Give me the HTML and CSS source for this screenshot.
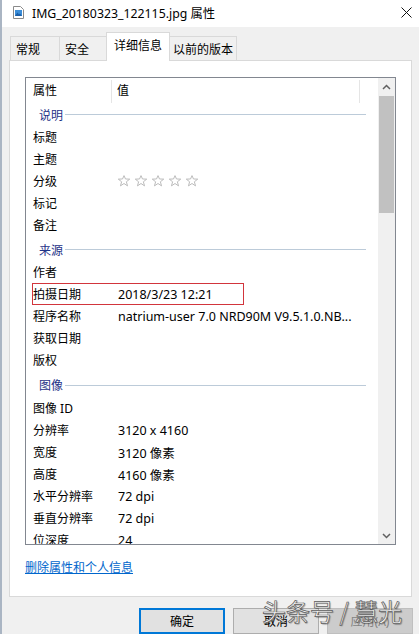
FILE: index.html
```html
<!DOCTYPE html>
<html lang="zh-CN">
<head>
<meta charset="utf-8">
<link rel="stylesheet" href="styles.css">
</head>
<body>
<div class="window">
  <div class="titlebar">
    <svg class="ficon" width="11" height="13" viewBox="0 0 11 13">
      <path d="M0.5 0.5 H7.5 L10.5 3.5 V12.5 H0.5 Z" fill="#fff" stroke="#8a8a8a"/>
      <rect x="2" y="4" width="7" height="6" fill="#3c8ed8"/>
      <path d="M2 10 L4.5 6.5 L6 8.5 L7 7.5 L9 10 Z" fill="#1b5fa8"/>
    </svg>
    <span class="title">IMG_20180323_122115.jpg 属性</span>
    <svg class="close" width="11" height="11" viewBox="0 0 11 11">
      <path d="M0.5 0.5 L10.5 10.5 M10.5 0.5 L0.5 10.5" stroke="#111" stroke-width="1"/>
    </svg>
  </div>
  <div class="tabs">
    <div class="tab">常规</div>
    <div class="tab">安全</div>
    <div class="tab active">详细信息</div>
    <div class="tab">以前的版本</div>
  </div>
  <div class="panel">
    <div class="list">
      <div class="list-body">
        <div class="header">
          <div class="hcell hname">属性</div>
          <div class="hcell hvalue">值</div>
        </div>
        <div class="group group-first"><span>说明</span><i class="gline"></i></div>
        <div class="row"><div class="cells"><span class="name">标题</span><span class="value"></span></div></div>
        <div class="row"><div class="cells"><span class="name">主题</span><span class="value"></span></div></div>
        <div class="row"><div class="cells"><span class="name">分级</span><span class="value stars">
          <svg class="star" viewBox="0 0 12 12"><polygon points="6,0.6 7.47,3.98 11.71,4.15 8.38,6.77 9.53,10.85 6,8.5 2.47,10.85 3.62,6.77 0.29,4.15 4.53,3.98"/></svg>
          <svg class="star" viewBox="0 0 12 12"><polygon points="6,0.6 7.47,3.98 11.71,4.15 8.38,6.77 9.53,10.85 6,8.5 2.47,10.85 3.62,6.77 0.29,4.15 4.53,3.98"/></svg>
          <svg class="star" viewBox="0 0 12 12"><polygon points="6,0.6 7.47,3.98 11.71,4.15 8.38,6.77 9.53,10.85 6,8.5 2.47,10.85 3.62,6.77 0.29,4.15 4.53,3.98"/></svg>
          <svg class="star" viewBox="0 0 12 12"><polygon points="6,0.6 7.47,3.98 11.71,4.15 8.38,6.77 9.53,10.85 6,8.5 2.47,10.85 3.62,6.77 0.29,4.15 4.53,3.98"/></svg>
          <svg class="star" viewBox="0 0 12 12"><polygon points="6,0.6 7.47,3.98 11.71,4.15 8.38,6.77 9.53,10.85 6,8.5 2.47,10.85 3.62,6.77 0.29,4.15 4.53,3.98"/></svg>
        </span></div></div>
        <div class="row"><div class="cells"><span class="name">标记</span><span class="value"></span></div></div>
        <div class="row"><div class="cells"><span class="name">备注</span><span class="value"></span></div></div>
        <div class="group"><span>来源</span><i class="gline"></i></div>
        <div class="row"><div class="cells"><span class="name">作者</span><span class="value"></span></div></div>
        <div class="row"><div class="cells marked"><span class="name">拍摄日期</span><span class="value">2018/3/23 12:21</span></div></div>
        <div class="row"><div class="cells"><span class="name">程序名称</span><span class="value">natrium-user 7.0 NRD90M V9.5.1.0.NB...</span></div></div>
        <div class="row"><div class="cells"><span class="name">获取日期</span><span class="value"></span></div></div>
        <div class="row"><div class="cells"><span class="name">版权</span><span class="value"></span></div></div>
        <div class="group group-tall"><span>图像</span><i class="gline"></i></div>
        <div class="row"><div class="cells"><span class="name">图像 ID</span><span class="value"></span></div></div>
        <div class="row"><div class="cells"><span class="name">分辨率</span><span class="value">3120 x 4160</span></div></div>
        <div class="row"><div class="cells"><span class="name">宽度</span><span class="value">3120 像素</span></div></div>
        <div class="row"><div class="cells"><span class="name">高度</span><span class="value">4160 像素</span></div></div>
        <div class="row"><div class="cells"><span class="name">水平分辨率</span><span class="value">72 dpi</span></div></div>
        <div class="row"><div class="cells"><span class="name">垂直分辨率</span><span class="value">72 dpi</span></div></div>
        <div class="row"><div class="cells"><span class="name">位深度</span><span class="value">24</span></div></div>
      </div>
      <div class="scrollbar">
        <div class="sb-btn">
          <svg width="9" height="6" viewBox="0 0 9 6"><polyline points="1,5 4.5,1.5 8,5" fill="none" stroke="#606060" stroke-width="1.5"/></svg>
        </div>
        <div class="thumb"></div>
        <div class="sb-fill"></div>
        <div class="sb-btn">
          <svg width="9" height="6" viewBox="0 0 9 6"><polyline points="1,1 4.5,4.5 8,1" fill="none" stroke="#606060" stroke-width="1.5"/></svg>
        </div>
      </div>
    </div>
    <a class="link" href="#">删除属性和个人信息</a>
  </div>
  <div class="buttons">
    <div class="btn primary">确定</div>
    <div class="btn">取消</div>
    <div class="btn disabled">应用(A)</div>
  </div>
  <div class="watermark">头条号 / 慧光</div>
</div>
</body>
</html>
```

FILE: styles.css
```css
* {
  box-sizing: border-box;
  margin: 0;
  padding: 0;
}

html, body {
  width: 419px;
  height: 634px;
  overflow: hidden;
  background: #f0f0f0;
}

body {
  font-family: "Noto Sans", "Noto Sans CJK SC", sans-serif;
  font-size: 12px;
  color: #000;
}

.window {
  position: relative;
  height: 634px;
  border-left: 2px solid #aab5c3;
  display: flex;
  flex-direction: column;
}

.titlebar {
  height: 27px;
  flex: none;
  background: #fff;
  display: flex;
  align-items: center;
  padding-left: 11px;
  padding-bottom: 2px;
}

.ficon {
  flex: none;
}

.title {
  margin-left: 8px;
  font-size: 12.3px;
  color: #000;
  white-space: nowrap;
}

.close {
  margin-left: auto;
  margin-right: 7px;
}

.tabs {
  height: 33px;
  flex: none;
  display: flex;
  align-items: flex-end;
  padding-left: 8px;
  position: relative;
  z-index: 2;
}

.tab {
  height: 24px;
  min-width: 50px;
  padding: 2px 3px 0 5px;
  line-height: 21px;
  border: 1px solid #d9d9d9;
  border-bottom: none;
  background: #f0f0f0;
  white-space: nowrap;
}

.tab + .tab {
  margin-left: -1px;
}

.tab.active {
  height: 29px;
  padding: 2px 7px 0 7px;
  margin-left: -3px;
  margin-right: -2px;
  margin-bottom: -1px;
  background: #fff;
  position: relative;
  z-index: 3;
}

.panel {
  flex: none;
  margin-left: 7px;
  width: 403px;
  height: 537px;
  border: 1px solid #d9d9d9;
  background: #fff;
  padding: 16px 0 0 15px;
  position: relative;
  z-index: 1;
}

.list {
  width: 371px;
  height: 468px;
  border: 1px solid #828790;
  display: flex;
  overflow: hidden;
}

.list-body {
  width: 352px;
  flex: none;
  display: flex;
  flex-direction: column;
  overflow: hidden;
}

.header {
  height: 25px;
  flex: none;
  display: flex;
  padding-top: 2px;
}

.hcell {
  line-height: 21px;
  border-right: 1px solid #e5e5e5;
  white-space: nowrap;
}

.hname {
  width: 86px;
  padding-left: 7px;
}

.hvalue {
  width: 248px;
  padding-left: 5px;
}

.group {
  height: 25px;
  flex: none;
  display: flex;
  align-items: center;
  padding-left: 13px;
  padding-top: 2px;
  color: #1e3287;
}

.group-first {
  height: 23px;
  padding-top: 0;
}

.group-tall {
  height: 26px;
}

.gline {
  flex: 1;
  height: 1px;
  background: #bccbd9;
  margin: 0 12px 0 2px;
}

.row {
  height: 22px;
  flex: none;
  display: flex;
  align-items: center;
}

.cells {
  margin-left: 6px;
  height: 22px;
  border: 1px solid transparent;
  display: flex;
  align-items: center;
  flex: 1;
  white-space: nowrap;
}

.cells.marked {
  flex: none;
  width: 212px;
  border-color: #d2353c;
}

.name {
  width: 84px;
  flex: none;
}

.value {
  white-space: nowrap;
  font-size: 12.5px;
  padding-left: 1px;
}

.stars {
  display: flex;
  gap: 5px;
}

.star {
  width: 12px;
  height: 12px;
  fill: none;
  stroke: #b4b4b4;
  stroke-width: 0.9;
}

.scrollbar {
  width: 17px;
  flex: none;
  background: #f0f0f0;
  display: flex;
  flex-direction: column;
}

.sb-btn {
  height: 17px;
  flex: none;
  display: flex;
  align-items: center;
  justify-content: center;
}

.thumb {
  height: 117px;
  flex: none;
  margin: 1px 1px 0 1px;
  background: #c1c1c1;
}

.sb-fill {
  flex: 1;
}

.link {
  display: inline-block;
  margin-top: 15px;
  line-height: 16px;
  color: #0066cc;
  text-decoration: underline;
}

.buttons {
  flex: none;
  display: flex;
  justify-content: flex-end;
  gap: 8px;
  margin-top: 11px;
  padding-right: 6px;
}

.btn {
  width: 86px;
  height: 26px;
  background: #e1e1e1;
  border: 1px solid #adadad;
  display: flex;
  align-items: center;
  justify-content: center;
}

.btn.primary {
  border: 2px solid #0078d7;
}

.btn.disabled {
  background: #cccccc;
  border-color: #bfbfbf;
  color: #838383;
}

.watermark {
  position: absolute;
  left: 260px;
  top: 596px;
  font-family: "Noto Sans CJK SC", sans-serif;
  font-size: 24px;
  line-height: 30px;
  color: #f6f6f6;
  -webkit-text-stroke: 0.7px #5a5a5a;
  text-shadow: 1px 1px 1px rgba(0, 0, 0, 0.35);
  white-space: nowrap;
  z-index: 5;
}
```
